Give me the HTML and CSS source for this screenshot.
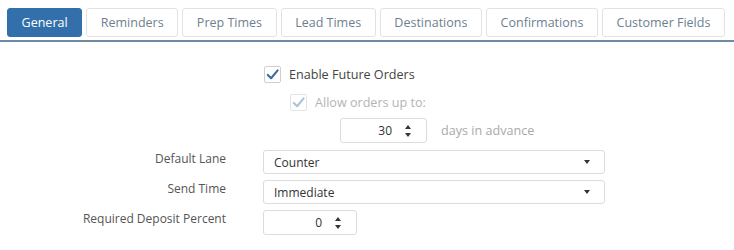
FILE: index.html
```html
<!DOCTYPE html>
<html lang="en">
<head>
  <meta charset="UTF-8" />
  <title>Order Settings</title>
  <link rel="stylesheet" href="styles.css">
</head>
<body>

  <!-- Tabs -->
  <div class="tabs">
    <div class="tab active">General</div>
    <div class="tab">Reminders</div>
    <div class="tab">Prep Times</div>
    <div class="tab">Lead Times</div>
    <div class="tab">Destinations</div>
    <div class="tab">Confirmations</div>
    <div class="tab">Customer Fields</div>
  </div>

  <!-- General settings -->
  <div class="settings">

    <div class="row">
      <div class="label"></div>
      <label class="check">
        <span class="box"><svg viewBox="0 0 16 16"><path d="M3 8.5 L6.5 12 L13.5 3.5"/></svg></span>
        Enable Future Orders
      </label>
    </div>

    <div class="row">
      <div class="label"></div>
      <label class="check disabled indent">
        <span class="box"><svg viewBox="0 0 16 16"><path d="M3 8.5 L6.5 12 L13.5 3.5"/></svg></span>
        Allow orders up to:
      </label>
    </div>

    <div class="row">
      <div class="label"></div>
      <div class="days">
        <div class="spinner days-spin">
          <span class="value">30</span>
          <span class="arrows"><i class="up"></i><i class="down"></i></span>
        </div>
        <span class="muted">days in advance</span>
      </div>
    </div>

    <div class="row field first">
      <div class="label">Default Lane</div>
      <div class="select">Counter <i class="caret"></i></div>
    </div>

    <div class="row field">
      <div class="label">Send Time</div>
      <div class="select">Immediate <i class="caret"></i></div>
    </div>

    <div class="row field">
      <div class="label">Required Deposit Percent</div>
      <div class="spinner deposit-spin">
        <span class="value">0</span>
        <span class="arrows"><i class="up"></i><i class="down"></i></span>
      </div>
    </div>

  </div>

</body>
</html>
```

FILE: styles.css
```css
body {
  margin: 0;
  font-family: "Open Sans", "Noto Sans", sans-serif;
  font-size: 12px;
  color: #555;
  background: #fff;
}

/* Tabs */
.tabs {
  display: flex;
  gap: 4px;
  margin-top: 8px;
  padding: 0 0 3px 7px;
  border-bottom: 2px solid #6f8aa3;
}

.tab {
  flex: none;
  white-space: nowrap;
  height: 29px;
  line-height: 28px;
  box-sizing: border-box;
  padding: 0 13.6px;
  border: 1px solid #e2e2e2;
  border-radius: 3px;
  color: #6d7f90;
  font-size: 12.5px;
}

.tab.active {
  background: #3370ab;
  border-color: #3370ab;
  color: #fff;
}

/* Form */
.settings {
  display: flex;
  flex-direction: column;
  padding-top: 24px;
}

.row {
  display: flex;
  align-items: center;
}

.label {
  width: 226px;
  margin-right: 37px;
  text-align: right;
  flex-shrink: 0;
}

.field .label {
  align-self: flex-start;
}

.check {
  display: flex;
  align-items: center;
  gap: 8px;
  height: 17px;
  margin-left: 1px;
  color: #444;
  font-size: 12.6px;
}

.check.indent {
  margin-left: 27px;
  margin-top: 11px;
}

.check.disabled {
  color: #b4b4b4;
}

.box {
  width: 15px;
  height: 15px;
  border: 1px solid #cfcfcf;
  border-radius: 2px;
  background: #fff;
  display: flex;
}

.box svg {
  width: 15px;
  height: 15px;
}

.box path {
  fill: none;
  stroke: #3a6c97;
  stroke-width: 2.2;
  stroke-linecap: round;
  stroke-linejoin: round;
}

.disabled .box {
  border-color: #e4e4e4;
}

.disabled .box path {
  stroke: #a8c3da;
}

.days {
  display: flex;
  align-items: center;
  gap: 14px;
  margin-left: 77px;
  margin-top: 7px;
}

.muted {
  color: #a9a9a9;
  font-size: 12.6px;
}

.spinner {
  display: flex;
  align-items: center;
  justify-content: flex-end;
  box-sizing: border-box;
  height: 25px;
  border: 1px solid #dcdcdc;
  border-radius: 3px;
  padding-right: 15px;
  color: #333;
}

.days-spin {
  width: 87px;
}

.deposit-spin {
  width: 94px;
  height: 25px;
}

.spinner .value {
  margin-right: 13px;
}

.arrows {
  display: flex;
  flex-direction: column;
  gap: 4px;
}

.arrows i {
  width: 0;
  height: 0;
  border-left: 3.5px solid transparent;
  border-right: 3.5px solid transparent;
}

.arrows .up {
  border-bottom: 4px solid #333;
}

.arrows .down {
  border-top: 4px solid #333;
}

.field {
  margin-top: 6px;
}

.field.first {
  margin-top: 7px;
}

.select {
  display: flex;
  align-items: center;
  justify-content: space-between;
  box-sizing: border-box;
  width: 342px;
  height: 24px;
  padding: 0 14px 0 10px;
  border: 1px solid #dcdcdc;
  border-radius: 3px;
  color: #333;
}

.caret {
  width: 0;
  height: 0;
  border-left: 3.5px solid transparent;
  border-right: 3.5px solid transparent;
  border-top: 4px solid #333;
}
```
